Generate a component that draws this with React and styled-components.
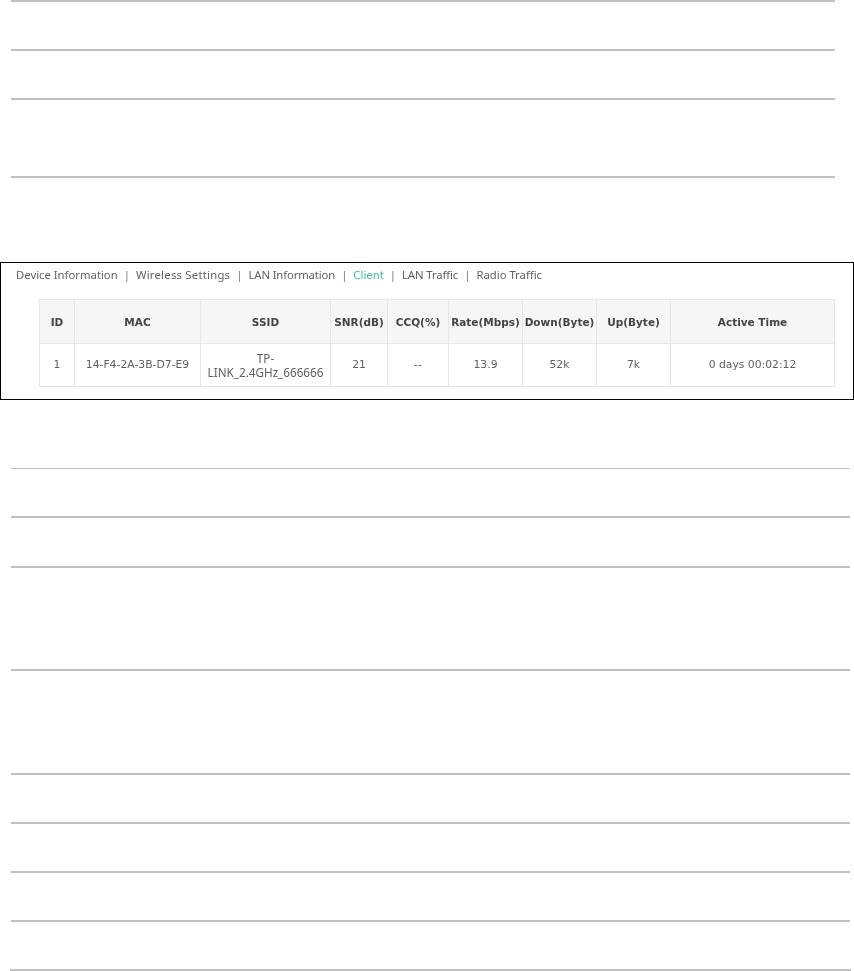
import React from "react";
import styled, { createGlobalStyle } from "styled-components";

const Global = createGlobalStyle`
  html, body { margin: 0; padding: 0; background: #fff; }
  body { font-family: "Noto Sans", "Liberation Sans", sans-serif; overflow: hidden; }
`;

const Page = styled.div`
  width: 854px;
  height: 971px;
  overflow: hidden;
`;

const Rule = styled.div`
  box-sizing: border-box;
  height: ${(p) => p.$h}px;
  margin-left: ${(p) => p.$left ?? 11}px;
  width: ${(p) => p.$width}px;
  border-top: ${(p) => p.$weight ?? 2}px solid #c0c0c0;
`;

const Frame = styled.section`
  box-sizing: border-box;
  margin-bottom: 68px;
  width: 854px;
  height: 138px;
  border: 1px solid #000;
  padding: 5px 19px 0 15px;
`;

const Nav = styled.nav`
  display: flex;
  align-items: center;
  height: 13px;
  font-size: 11.3px;
  color: #666;
  white-space: nowrap;
  filter: blur(0.55px);
`;

const NavItem = styled.span`
  color: ${(p) => (p.$active ? "#3fbf9c" : "#5f5f5f")};
  letter-spacing: ${(p) => p.$track ?? 0}px;
`;

const Sep = styled.span`
  margin: 0 6px;
  color: #777;
`;

const Table = styled.table`
  margin: 18px 0 0 23px;
  width: 795px;
  height: 88px;
  table-layout: fixed;
  border-collapse: collapse;
  font-family: "DejaVu Sans", sans-serif;
  font-size: 10.8px;
  color: #5f5f5f;
  filter: blur(0.55px);
`;

const Head = styled.th`
  height: 43px;
  padding: 0;
  background: #f6f6f6;
  border: 1px solid #e6e6e6;
  color: #444;
  font-size: 10.5px;
  font-weight: 700;
  text-align: center;
  white-space: nowrap;
`;

const Cell = styled.td`
  padding: 0;
  border: 1px solid #e6e6e6;
  text-align: center;
  line-height: 14px;
`;

const SsidCell = styled(Cell)`
  font-family: "Noto Sans", sans-serif;
  font-size: 11.7px;
  line-height: 14.5px;
`;

const navItems = [
  ["Device Information", 0],
  ["Wireless Settings", 0.24],
  ["LAN Information", -0.13],
  ["Client", 0],
  ["LAN Traffic", -0.1],
  ["Radio Traffic", 0],
];
const columns = [
  ["ID", 35], ["MAC", 126], ["SSID", 130], ["SNR(dB)", 57], ["CCQ(%)", 61],
  ["Rate(Mbps)", 74], ["Down(Byte)", 74], ["Up(Byte)", 74], ["Active Time", 164],
];
const values = ["1", "14-F4-2A-3B-D7-E9", null, "21", "--", "13.9", "52k", "7k", "0 days 00:02:12"];
const topRules = [49, 49, 78, 86];
const bottomRules = [48, 50, 103, 104, 49, 49, 49, 49, 2];

export default function App() {
  return (
    <Page>
      <Global />
      {topRules.map((h, i) => (
        <Rule key={i} $h={h} $width={824} />
      ))}
      <Frame>
        <Nav>
          {navItems.map(([item, track], i) => (
            <React.Fragment key={item}>
              {i > 0 && <Sep>|</Sep>}
              <NavItem $active={item === "Client"} $track={track}>{item}</NavItem>
            </React.Fragment>
          ))}
        </Nav>
        <Table>
          <colgroup>
            {columns.map(([name, w]) => (
              <col key={name} width={w} />
            ))}
          </colgroup>
          <thead>
            <tr>
              {columns.map(([name]) => (
                <Head key={name}>{name}</Head>
              ))}
            </tr>
          </thead>
          <tbody>
            <tr>
              {values.map((v, i) =>
                v === null ? (
                  <SsidCell key={i}>
                    TP-
                    <br />
                    LINK_2.4GHz_666666
                  </SsidCell>
                ) : (
                  <Cell key={i}>{v}</Cell>
                )
              )}
            </tr>
          </tbody>
        </Table>
      </Frame>
      {bottomRules.map((h, i) => (
        <Rule
          key={i}
          $h={h}
          $width={i === 8 ? 841 : 839}
          $left={i === 8 ? 10 : 11}
          $weight={i === 0 ? 1 : 2}
        />
      ))}
    </Page>
  );
}
